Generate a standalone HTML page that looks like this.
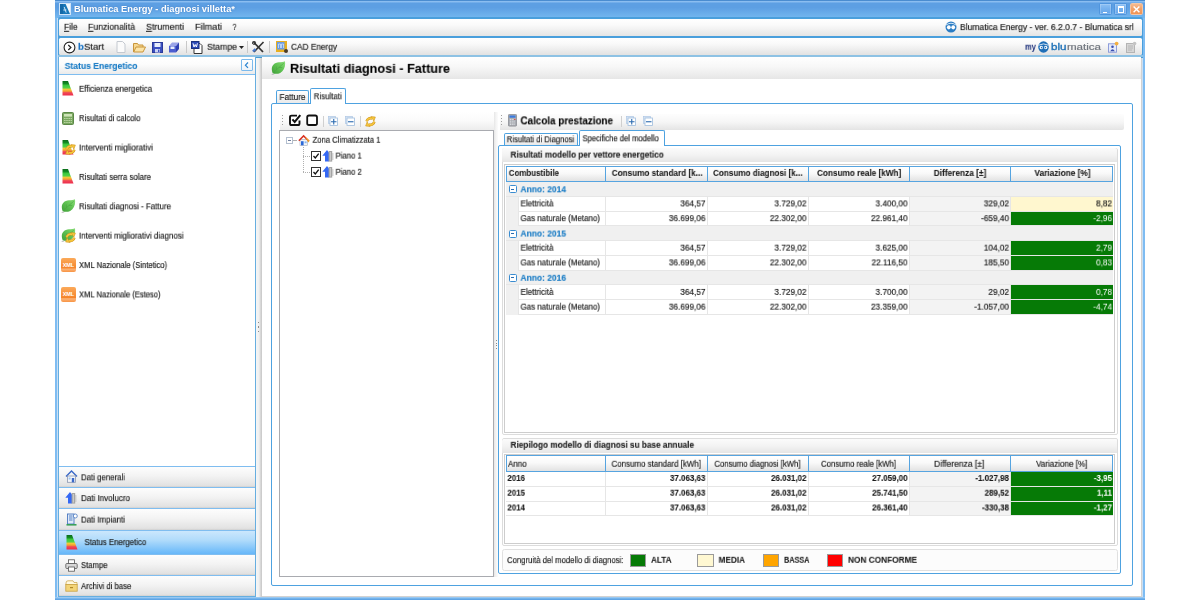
<!DOCTYPE html>
<html><head><meta charset="utf-8"><title>Blumatica Energy</title>
<style>html,body{margin:0;padding:0}body{width:1200px;height:600px;position:relative;overflow:hidden;background:#fff;font-family:'Liberation Sans', sans-serif;}u{text-decoration:underline;text-decoration-thickness:.8px;text-underline-offset:1px}.t{position:absolute;left:0;top:0;white-space:pre;transform-origin:0 0;will-change:transform}</style></head>
<body>
<div style="position:absolute;left:54.8px;top:0px;width:1090.5px;height:600px;background:#7ebcf2;"></div>
<div style="position:absolute;left:56.6px;top:17px;width:1086.8px;height:580px;background:#c9dff4;"></div>
<div style="position:absolute;left:54.8px;top:0px;width:1090.5px;height:17.5px;background:linear-gradient(#4a8cd0 0,#4a8cd0 4%,#95c5f5 9%,#5d9fe3 17%,#5d9fe3 42%,#74b7ef 100%);"></div>
<div style="position:absolute;left:57.8px;top:16.8px;width:1085.4px;height:40.2px;background:#4a9fdc;border-radius:2px;"></div>
<div style="position:absolute;left:57.8px;top:55.2px;width:1085.4px;height:1.7px;background:#8ec2e4;"></div>
<div style="position:absolute;left:57.8px;top:56.8px;width:1085.4px;height:1.3px;background:#4a9cd2;"></div>
<div style="position:absolute;left:55px;top:597px;width:1090px;height:3px;background:linear-gradient(#a9d2f6,#6aaeea 60%,#5a9fe2);"></div>
<svg width="0" height="0" style="position:absolute"><defs><linearGradient id="ape" x1="0" y1="0" x2="0" y2="1"><stop offset="0" stop-color="#0b6e1a"/><stop offset=".18" stop-color="#128a24"/><stop offset=".3" stop-color="#3cc83c"/><stop offset=".48" stop-color="#52d048"/><stop offset=".56" stop-color="#f0cc38"/><stop offset=".7" stop-color="#f4a030"/><stop offset=".8" stop-color="#f04858"/><stop offset="1" stop-color="#ec2a4a"/></linearGradient><linearGradient id="leafg" x1="0" y1="1" x2="1" y2="0"><stop offset="0" stop-color="#3f9e38"/><stop offset=".55" stop-color="#62c454"/><stop offset="1" stop-color="#8adc78"/></linearGradient><linearGradient id="xmlg" x1="0" y1="0" x2="0" y2="1"><stop offset="0" stop-color="#fba654"/><stop offset=".75" stop-color="#f6842a"/><stop offset=".8" stop-color="#fbb070"/><stop offset="1" stop-color="#f89040"/></linearGradient></defs></svg>
<div style="position:absolute;left:59px;top:2.8px;width:12px;height:12px;background:#f4f9fd;border:1px solid #cfe4f8;box-sizing:border-box;"><svg width="10" height="10" viewBox="0 0 10 10" style="position:absolute;left:0;top:0"><path d="M0 0 H5.6 L10 10 H0 Z" fill="#1877b8"/><path d="M0 0 H3 V10 H0Z" fill="#1469a8"/><path d="M4.2 3 L6.2 8.6 M3.4 6 H6.4" stroke="#cfe6f6" stroke-width="1" fill="none"/></svg></div>
<span class="t" style="font-size:8.6px;line-height:12.6px;font-weight:700;color:#fff;transform:translate(74.00px,2.70px) scaleX(1.0839);text-shadow:0 0 2px rgba(40,90,160,.5);">Blumatica Energy - diagnosi villetta*</span>
<div style="position:absolute;left:1098.8px;top:3px;width:12.8px;height:12.4px;background:linear-gradient(#8cc0f4,#74b0ee 50%,#66a6ea);border:1px solid #4f95de;box-shadow:inset 0 0 0 .6px rgba(255,255,255,.35);box-sizing:border-box;border-radius:1.5px;"><div style="position:absolute;left:3px;top:7.5px;width:4px;height:1.5px;background:#fff"></div></div>
<div style="position:absolute;left:1114.4px;top:3px;width:12.8px;height:12.4px;background:linear-gradient(#8cc0f4,#74b0ee 50%,#66a6ea);border:1px solid #4f95de;box-shadow:inset 0 0 0 .6px rgba(255,255,255,.35);box-sizing:border-box;border-radius:1.5px;"><div style="position:absolute;left:2.4px;top:2px;width:6.2px;height:6.8px;border:1px solid #fff;border-top-width:2.2px;box-sizing:border-box"></div></div>
<div style="position:absolute;left:1130px;top:3px;width:12.8px;height:12.4px;background:linear-gradient(#f6bb90,#f2a066 50%,#ef9456);border:1px solid #f4c6a4;box-sizing:border-box;border-radius:1.5px;"><svg width="11" height="11" style="position:absolute;left:0;top:0" viewBox="0 0 11 11"><path d="M2.6 2.4 L8.4 8.2 M8.4 2.4 L2.6 8.2" stroke="#fff" stroke-width="1.4"/></svg></div>
<div style="position:absolute;left:58.8px;top:18.6px;width:1083.4px;height:17.3px;border-radius:1.5px;background:linear-gradient(#fff,#fafafa 35%,#e5e5e5 100%);"></div>
<span class="t" style="font-size:9.6px;line-height:13.6px;font-weight:400;color:#1a1a1a;transform:translate(64.00px,19.80px) scaleX(0.8718);-webkit-text-stroke:.18px;"><u>F</u>ile</span>
<span class="t" style="font-size:9.6px;line-height:13.6px;font-weight:400;color:#1a1a1a;transform:translate(88.00px,19.80px) scaleX(0.9082);-webkit-text-stroke:.18px;"><u>F</u>unzionalità</span>
<span class="t" style="font-size:9.6px;line-height:13.6px;font-weight:400;color:#1a1a1a;transform:translate(146.00px,19.80px) scaleX(0.9254);-webkit-text-stroke:.18px;"><u>S</u>trumenti</span>
<span class="t" style="font-size:9.6px;line-height:13.6px;font-weight:400;color:#1a1a1a;transform:translate(195.00px,19.80px) scaleX(0.9558);-webkit-text-stroke:.18px;">Filmati</span>
<span class="t" style="font-size:9.6px;line-height:13.6px;font-weight:400;color:#1a1a1a;transform:translate(232.50px,19.80px) scaleX(0.7485);-webkit-text-stroke:.18px;">?</span>
<span class="t" style="font-size:9.6px;line-height:13.6px;font-weight:400;color:#1a1a1a;transform:translate(960.00px,20.10px) scaleX(0.8927);-webkit-text-stroke:.18px;">Blumatica Energy - ver. 6.2.0.7 - Blumatica srl</span>
<svg style="position:absolute;left:945px;top:21px" width="12" height="12" viewBox="0 0 12 12"><circle cx="6" cy="6" r="5.5" fill="#2a7cc4"/><ellipse cx="3.8" cy="6.3" rx="1.9" ry="2.1" fill="#fff"/><ellipse cx="8.2" cy="6.3" rx="1.9" ry="2.1" fill="#fff"/><path d="M1 4 Q6 0.5 11 4" stroke="#fff" stroke-width="0.8" fill="none"/></svg>
<div style="position:absolute;left:58.8px;top:38px;width:1083.4px;height:17.2px;border-radius:1.5px;background:linear-gradient(#fff,#f9f9f9 35%,#e2e2e2 100%);"></div>
<svg style="position:absolute;left:62.5px;top:40.5px" width="13" height="13" viewBox="0 0 13 13"><circle cx="6.5" cy="6.5" r="5.4" fill="#fff" stroke="#222" stroke-width="1.1"/><path d="M5.3 4 L7.9 6.5 L5.3 9" stroke="#222" stroke-width="1.2" fill="none"/></svg>
<span class="t" style="font-size:9.6px;line-height:13.6px;font-weight:400;color:#222;transform:translate(78.00px,39.80px) scaleX(0.9946);-webkit-text-stroke:.18px;"><b style="color:#1c74c4">b</b>Start</span>
<svg style="position:absolute;left:116px;top:41px" width="10" height="12" viewBox="0 0 10 12"><path d="M1 .5 H6.5 L9 3 V11.5 H1 Z" fill="#fbfbfb" stroke="#c4c9d0" stroke-width="1"/></svg>
<svg style="position:absolute;left:133px;top:42px" width="13" height="11" viewBox="0 0 13 11"><path d="M.5 10 V1.5 H4.5 L5.5 3 H10 V5" fill="#f7d891" stroke="#c8953a" stroke-width="1"/><path d="M.7 10 L3 5 H12.5 L10 10 Z" fill="#fbe3a6" stroke="#c8953a" stroke-width="1"/></svg>
<svg style="position:absolute;left:151.5px;top:41.5px" width="11" height="11" viewBox="0 0 11 11"><rect x=".5" y=".5" width="10" height="10" fill="#3b4fc0" stroke="#2a3a9a"/><rect x="2.5" y="1" width="6" height="4" fill="#e8eefc"/><rect x="3" y="7" width="5" height="3.5" fill="#c9d2f5"/><rect x="6" y="7.6" width="1.4" height="2.4" fill="#3b4fc0"/></svg>
<svg style="position:absolute;left:168px;top:41px" width="12" height="12" viewBox="0 0 12 12"><path d="M1 5 L4 1.5 H11 L8 5 Z" fill="#9aa4e8"/><path d="M8 5 L11 1.5 V8 L8 11.5 Z" fill="#2f3fb0"/><rect x="1" y="5" width="7" height="6.5" fill="#4c5ed0"/><rect x="2.5" y="5.5" width="4" height="2.5" fill="#e8eefc"/></svg>
<div style="position:absolute;left:186px;top:41px;width:1px;height:12px;background:#c8c8c8;"></div>
<svg style="position:absolute;left:191px;top:40.5px" width="12" height="13" viewBox="0 0 12 13"><path d="M3 2.5 H9 L11 4.5 V12.5 H3 Z" fill="#fff" stroke="#333" stroke-width="1"/><rect x=".5" y=".5" width="7.5" height="7" fill="#2b4bb8" stroke="#1c327e" stroke-width="1"/><path d="M2 2.3 L3 6 L4.2 3.5 L5.4 6 L6.4 2.3" stroke="#fff" stroke-width="1" fill="none"/></svg>
<span class="t" style="font-size:9.4px;line-height:13.4px;font-weight:400;color:#222;transform:translate(207.00px,39.80px) scaleX(0.9284);-webkit-text-stroke:.18px;">Stampe</span>
<svg style="position:absolute;left:238.5px;top:46px" width="5" height="3" viewBox="0 0 5 3"><path d="M0 0 H5 L2.5 3 Z" fill="#222"/></svg>
<div style="position:absolute;left:246.5px;top:41px;width:1px;height:12px;background:#c8c8c8;"></div>
<svg style="position:absolute;left:251.5px;top:41px" width="13" height="12" viewBox="0 0 13 12"><path d="M1.5 1 L11 11" stroke="#333" stroke-width="1.8"/><path d="M11.5 1 L2 11" stroke="#333" stroke-width="1.6"/><path d="M1 10.5 L3.5 8" stroke="#4a78c8" stroke-width="2.4"/><circle cx="2" cy="1.8" r="1.6" fill="none" stroke="#333" stroke-width="1"/></svg>
<div style="position:absolute;left:269px;top:41px;width:1px;height:12px;background:#c8c8c8;"></div>
<svg style="position:absolute;left:276px;top:40.5px" width="12" height="12" viewBox="0 0 12 12"><rect x="0" y="0" width="11" height="11" fill="#e8b020"/><rect x="1" y="1" width="7.5" height="7.5" fill="#6a9be0"/><path d="M2.5 7 V3 H4.5 V7 M5.5 7 V3 H7.5 V7" stroke="#cfe0f8" stroke-width=".8" fill="none"/><circle cx="10" cy="10" r="2" fill="#4a3c28"/></svg>
<span class="t" style="font-size:9.4px;line-height:13.4px;font-weight:400;color:#222;transform:translate(291.00px,39.80px) scaleX(0.8828);-webkit-text-stroke:.18px;">CAD Energy</span>
<span class="t" style="font-size:8.4px;line-height:12.4px;font-weight:700;color:#1b2f7a;transform:translate(1025.00px,40.70px) scaleX(0.8919);">my</span>
<svg style="position:absolute;left:1038px;top:40.6px" width="11" height="12" viewBox="0 0 11 12"><ellipse cx="5.5" cy="6" rx="5.3" ry="5.8" fill="#1f6fb8"/><path d="M.6 4.2 Q5.5 1.6 10.4 4.2" stroke="#fff" stroke-width=".8" fill="none"/><ellipse cx="3.3" cy="6.5" rx="1.7" ry="1.8" fill="#fff"/><ellipse cx="7.7" cy="6.5" rx="1.7" ry="1.8" fill="#fff"/><circle cx="3.6" cy="6.6" r=".8" fill="#1f6fb8"/><circle cx="7.4" cy="6.6" r=".8" fill="#1f6fb8"/></svg>
<span class="t" style="font-size:8.6px;line-height:12.6px;font-weight:400;color:#1f72b8;transform:translate(1051.00px,40.70px) scaleX(1.3515);-webkit-text-stroke:.18px;-webkit-text-stroke:.3px #1f72b8;">blu</span>
<span class="t" style="font-size:8.6px;line-height:12.6px;font-weight:400;color:#70767e;transform:translate(1066.90px,40.70px) scaleX(1.3472);-webkit-text-stroke:.18px;">matica</span>
<svg style="position:absolute;left:1108px;top:41px" width="11" height="12" viewBox="0 0 11 12"><rect x=".5" y="2.8" width="8" height="8.4" fill="#e6ebfa" stroke="#8494d8" stroke-width=".9"/><circle cx="4.5" cy="5.8" r="1.3" fill="#3a4fb0"/><path d="M2.2 10.2 Q4.5 6.2 6.8 10.2 Z" fill="#3a4fb0"/><circle cx="8.6" cy="2.6" r="1.9" fill="#f4b040"/></svg>
<svg style="position:absolute;left:1126px;top:41px" width="11" height="12" viewBox="0 0 11 12"><rect x=".5" y="2.5" width="8" height="9" fill="#d6d6d6" stroke="#b4b4b4"/><path d="M2 5 H7 M2 7 H7 M2 9 H6" stroke="#b0b0b0" stroke-width=".8"/><circle cx="8.6" cy="2.6" r="1.8" fill="#c4c4c4"/></svg>
<div style="position:absolute;left:59px;top:58px;width:1082.5px;height:539px;background:#fff;"></div>
<div style="position:absolute;left:1141px;top:58px;width:1.3px;height:539px;background:#d2d2d2;"></div>
<div style="position:absolute;left:262px;top:596px;width:880px;height:1.2px;background:#d2d2d2;"></div>
<div style="position:absolute;left:57.8px;top:57px;width:198.2px;height:540px;box-sizing:border-box;border:1.2px solid #66aee0;border-top:none;background:#fff;"></div>
<div style="position:absolute;left:59px;top:58px;width:196px;height:15.5px;background:linear-gradient(#fff,#fcfcfc 40%,#ebebeb);border-bottom:1px solid #7fbdf0;"></div>
<span class="t" style="font-size:9px;line-height:13px;font-weight:700;color:#1479c4;transform:translate(64.70px,59.90px) scaleX(0.9512);-webkit-text-stroke:.1px;">Status Energetico</span>
<div style="position:absolute;left:241.3px;top:59px;width:11.4px;height:12.4px;box-sizing:border-box;border:1px solid #7cbaec;background:linear-gradient(#fff,#eef4fa);border-radius:1px;"><svg width="9" height="10" style="position:absolute;left:0;top:0" viewBox="0 0 9 10"><path d="M6 2.5 L3.4 5.2 L6 7.9" stroke="#2a84d0" stroke-width="1.2" fill="none"/></svg></div>
<span class="t" style="font-size:9px;line-height:13px;font-weight:400;color:#1a1a1a;transform:translate(79.00px,82.80px) scaleX(0.8754);-webkit-text-stroke:.18px;">Efficienza energetica</span>
<svg style="position:absolute;left:61.5px;top:81.3px" width="12" height="15" viewBox="0 0 12 15"><path d="M.5 0 H6 L11.5 14.6 H.5 Z" fill="url(#ape)"/></svg>
<span class="t" style="font-size:9px;line-height:13px;font-weight:400;color:#1a1a1a;transform:translate(79.00px,112.18px) scaleX(0.8524);-webkit-text-stroke:.18px;">Risultati di calcolo</span>
<svg style="position:absolute;left:62px;top:111.58px" width="12" height="13" viewBox="0 0 12 13"><rect x=".5" y=".5" width="11" height="12" rx="1" fill="#7aa860" stroke="#5c8848"/><rect x="2" y="2" width="8" height="2.6" fill="#cfe4b8"/><path d="M2 6.5 H10 M2 8.5 H10 M2 10.5 H10" stroke="#b8d4a0" stroke-width="1.1" stroke-dasharray="1.6 .6"/></svg>
<span class="t" style="font-size:9px;line-height:13px;font-weight:400;color:#1a1a1a;transform:translate(79.00px,141.55px) scaleX(0.9021);-webkit-text-stroke:.18px;">Interventi migliorativi</span>
<svg style="position:absolute;left:61.5px;top:140.05px" width="12" height="15" viewBox="0 0 12 15"><path d="M.5 0 H6 L11.5 14.6 H.5 Z" fill="url(#ape)"/></svg>
<svg style="position:absolute;left:65.3px;top:143.85px" width="11" height="11" viewBox="0 0 11 11"><g stroke="#c88c18" stroke-width="2.6" fill="none"><path d="M1.7 5.3 A3.9 3.9 0 0 1 7.2 2.5"/><path d="M9.3 5.7 A3.9 3.9 0 0 1 3.8 8.5"/></g><g fill="#f6c63c" stroke="#c88c18" stroke-width=".5"><path d="M6 .5 L10.4 1 L8.9 5.2 Z"/><path d="M5 10.5 L.6 10 L2.1 5.8 Z"/></g><g stroke="#f6c63c" stroke-width="1.6" fill="none"><path d="M1.7 5.3 A3.9 3.9 0 0 1 7.2 2.5"/><path d="M9.3 5.7 A3.9 3.9 0 0 1 3.8 8.5"/></g></svg>
<span class="t" style="font-size:9px;line-height:13px;font-weight:400;color:#1a1a1a;transform:translate(79.00px,170.93px) scaleX(0.8777);-webkit-text-stroke:.18px;">Risultati serra solare</span>
<svg style="position:absolute;left:61.5px;top:169.43px" width="12" height="15" viewBox="0 0 12 15"><path d="M.5 0 H6 L11.5 14.6 H.5 Z" fill="url(#ape)"/></svg>
<span class="t" style="font-size:9px;line-height:13px;font-weight:400;color:#1a1a1a;transform:translate(79.00px,200.30px) scaleX(0.8800);-webkit-text-stroke:.18px;">Risultati diagnosi - Fatture</span>
<svg style="position:absolute;left:61.4px;top:199.0px" width="15" height="15" viewBox="0 0 15 15"><path d="M.2 14 L3.5 13.6 L2 12.2Z" fill="#b8b8b8"/><path d="M1.6 12 C-.6 6.5 1.8 1.8 8 1.3 C10.5 1.1 12.5 .9 13.9 .2 C14.8 5 13.2 9.8 9.2 11.9 C6.6 13.2 3.4 13.1 1.6 12 Z" fill="url(#leafg)"/><path d="M2.2 11.6 C5 9 9 5.5 12.8 2.2 M5.5 8.6 L5.3 5.5 M8 6.4 L11.2 6.6" stroke="#4aa840" stroke-width=".6" fill="none"/></svg>
<span class="t" style="font-size:9px;line-height:13px;font-weight:400;color:#1a1a1a;transform:translate(79.00px,229.68px) scaleX(0.8860);-webkit-text-stroke:.18px;">Interventi migliorativi diagnosi</span>
<svg style="position:absolute;left:61.4px;top:228.38px" width="15" height="15" viewBox="0 0 15 15"><path d="M.2 14 L3.5 13.6 L2 12.2Z" fill="#b8b8b8"/><path d="M1.6 12 C-.6 6.5 1.8 1.8 8 1.3 C10.5 1.1 12.5 .9 13.9 .2 C14.8 5 13.2 9.8 9.2 11.9 C6.6 13.2 3.4 13.1 1.6 12 Z" fill="url(#leafg)"/><path d="M2.2 11.6 C5 9 9 5.5 12.8 2.2 M5.5 8.6 L5.3 5.5 M8 6.4 L11.2 6.6" stroke="#4aa840" stroke-width=".6" fill="none"/></svg>
<svg style="position:absolute;left:65.3px;top:232.38px" width="11" height="11" viewBox="0 0 11 11"><g stroke="#c88c18" stroke-width="2.6" fill="none"><path d="M1.7 5.3 A3.9 3.9 0 0 1 7.2 2.5"/><path d="M9.3 5.7 A3.9 3.9 0 0 1 3.8 8.5"/></g><g fill="#f6c63c" stroke="#c88c18" stroke-width=".5"><path d="M6 .5 L10.4 1 L8.9 5.2 Z"/><path d="M5 10.5 L.6 10 L2.1 5.8 Z"/></g><g stroke="#f6c63c" stroke-width="1.6" fill="none"><path d="M1.7 5.3 A3.9 3.9 0 0 1 7.2 2.5"/><path d="M9.3 5.7 A3.9 3.9 0 0 1 3.8 8.5"/></g></svg>
<span class="t" style="font-size:9px;line-height:13px;font-weight:400;color:#1a1a1a;transform:translate(79.00px,259.06px) scaleX(0.8484);-webkit-text-stroke:.18px;">XML Nazionale (Sintetico)</span>
<div style="position:absolute;left:61.2px;top:257.96px;width:14.8px;height:14.2px;background:linear-gradient(#fbaa5a,#f6842a 72%,#fbb478 78%,#f89444);border-radius:2px;"><span style="position:absolute;left:1.6px;top:3.6px;font-size:5.6px;line-height:6px;font-weight:700;color:#fff;letter-spacing:-.25px">XML</span></div>
<span class="t" style="font-size:9px;line-height:13px;font-weight:400;color:#1a1a1a;transform:translate(79.00px,288.43px) scaleX(0.8416);-webkit-text-stroke:.18px;">XML Nazionale (Esteso)</span>
<div style="position:absolute;left:61.2px;top:287.33px;width:14.8px;height:14.2px;background:linear-gradient(#fbaa5a,#f6842a 72%,#fbb478 78%,#f89444);border-radius:2px;"><span style="position:absolute;left:1.6px;top:3.6px;font-size:5.6px;line-height:6px;font-weight:700;color:#fff;letter-spacing:-.25px">XML</span></div>
<div style="position:absolute;left:59px;top:466px;width:196px;height:21px;box-sizing:border-box;border-top:1px solid #7fbdf0;background:linear-gradient(#fdfdfd,#f3f3f3 45%,#e2e2e2 92%,#d0d0d0 100%);"></div>
<span class="t" style="font-size:9px;line-height:13px;font-weight:400;color:#1a1a1a;transform:translate(81.00px,471.30px) scaleX(0.8707);-webkit-text-stroke:.18px;">Dati generali</span>
<div style="position:absolute;left:59px;top:487px;width:196px;height:21px;box-sizing:border-box;border-top:1px solid #7fbdf0;background:linear-gradient(#fdfdfd,#f3f3f3 45%,#e2e2e2 92%,#d0d0d0 100%);"></div>
<span class="t" style="font-size:9px;line-height:13px;font-weight:400;color:#1a1a1a;transform:translate(81.00px,492.10px) scaleX(0.8904);-webkit-text-stroke:.18px;">Dati Involucro</span>
<div style="position:absolute;left:59px;top:508px;width:196px;height:21.5px;box-sizing:border-box;border-top:1px solid #7fbdf0;background:linear-gradient(#fdfdfd,#f3f3f3 45%,#e2e2e2 92%,#d0d0d0 100%);"></div>
<span class="t" style="font-size:9px;line-height:13px;font-weight:400;color:#1a1a1a;transform:translate(81.00px,513.60px) scaleX(0.8795);-webkit-text-stroke:.18px;">Dati Impianti</span>
<div style="position:absolute;left:59px;top:529.6px;width:196px;height:24.0px;box-sizing:border-box;border-top:1px solid #7fbdf0;background:linear-gradient(#cbe7fd,#b0dbfb 40%,#66b7f9 100%);"></div>
<span class="t" style="font-size:9px;line-height:13px;font-weight:400;color:#1a1a1a;transform:translate(84.50px,536.10px) scaleX(0.8691);-webkit-text-stroke:.18px;">Status Energetico</span>
<div style="position:absolute;left:59px;top:553.6px;width:196px;height:21.600000000000023px;box-sizing:border-box;border-top:1px solid #7fbdf0;background:linear-gradient(#fdfdfd,#f3f3f3 45%,#e2e2e2 92%,#d0d0d0 100%);"></div>
<span class="t" style="font-size:9px;line-height:13px;font-weight:400;color:#1a1a1a;transform:translate(81.00px,559.10px) scaleX(0.8540);-webkit-text-stroke:.18px;">Stampe</span>
<div style="position:absolute;left:59px;top:575.2px;width:196px;height:21.0px;box-sizing:border-box;border-top:1px solid #7fbdf0;background:linear-gradient(#fdfdfd,#f3f3f3 45%,#e2e2e2 92%,#d0d0d0 100%);"></div>
<span class="t" style="font-size:9px;line-height:13px;font-weight:400;color:#1a1a1a;transform:translate(81.00px,580.10px) scaleX(0.8585);-webkit-text-stroke:.18px;">Archivi di base</span>
<svg style="position:absolute;left:65px;top:470px" width="13" height="13" viewBox="0 0 13 13"><path d="M1 6.5 L6.5 1 L12 6.5" stroke="#3a68c8" stroke-width="1.4" fill="none"/><rect x="2.5" y="6" width="8" height="6.3" fill="#f4f6fa" stroke="#8a96b0" stroke-width=".8"/><rect x="6.8" y="8" width="2.4" height="4.3" fill="#3a68c8"/><rect x="3.6" y="7.5" width="2" height="2" fill="#9cc4f0"/></svg>
<svg style="position:absolute;left:65px;top:491px" width="12" height="13" viewBox="0 0 12 13"><path d="M.3 6.8 L5 1 L9.4 6.8 H7 V12.6 H3 V6.8 Z" fill="#3468f4"/><rect x="6.6" y="2" width="3.6" height="10.6" fill="#a4a4a4"/><rect x="7.8" y="3" width="1" height="8.6" fill="#d4d4d4"/><rect x="10.2" y="4" width="1.2" height="7" fill="#c8c8c8"/></svg>
<svg style="position:absolute;left:65.5px;top:512.5px" width="12" height="13" viewBox="0 0 12 13"><rect x="1.5" y="1" width="6.5" height="10" fill="#dfe9f8" stroke="#4a78c0" stroke-width=".9"/><path d="M3 3 H6.5 M3 5 H6.5 M3 7 H6.5" stroke="#4a78c0" stroke-width=".9"/><circle cx="9.3" cy="3" r="2" fill="#fff" stroke="#4a78c0" stroke-width=".8"/><rect x=".5" y="11" width="10" height="1.6" fill="#3aa05a"/></svg>
<svg style="position:absolute;left:66px;top:534.5px" width="12" height="15" viewBox="0 0 12 15"><path d="M.5 0 H6 L11.5 14.6 H.5 Z" fill="url(#ape)"/></svg>
<svg style="position:absolute;left:65px;top:558.5px" width="13" height="13" viewBox="0 0 13 13"><rect x="3.5" y=".8" width="6" height="4" fill="#fff" stroke="#555" stroke-width=".8"/><rect x=".8" y="4.5" width="11.4" height="5" rx="1" fill="#d8d8d8" stroke="#555" stroke-width=".8"/><rect x="3.5" y="8" width="6" height="4.2" fill="#fff" stroke="#555" stroke-width=".8"/></svg>
<svg style="position:absolute;left:65px;top:580px" width="13" height="12" viewBox="0 0 13 12"><path d="M1 3 Q1 .8 3 .8 H8 L9 2.5 H12 V5 H1 Z" fill="#fff8e0" stroke="#c8a040" stroke-width=".7"/><rect x=".8" y="4.5" width="11.4" height="6.7" fill="#f3d478" stroke="#c8a040" stroke-width=".8"/><rect x="5" y="7" width="3" height="1.2" fill="#b08828"/></svg>
<div style="position:absolute;left:256px;top:58px;width:5.6px;height:539px;background:linear-gradient(90deg,#f6f6f6 0,#f0f0f0 50%,#dcdcdc 70%,#c6c6c6 100%);"></div>
<div style="position:absolute;left:257.9px;top:322.2px;width:1px;height:1.2px;background:#8c8c8c;"></div>
<div style="position:absolute;left:257.9px;top:326.4px;width:1px;height:1.2px;background:#8c8c8c;"></div>
<div style="position:absolute;left:257.9px;top:330.6px;width:1px;height:1.2px;background:#8c8c8c;"></div>
<div style="position:absolute;left:262px;top:57px;width:879px;height:21.5px;background:linear-gradient(#fff,#f7f7f7 45%,#e6e6e6 100%);"></div>
<svg style="position:absolute;left:270.6px;top:61.3px" width="15" height="15" viewBox="0 0 15 15"><path d="M.2 14 L3.5 13.6 L2 12.2Z" fill="#b8b8b8"/><path d="M1.6 12 C-.6 6.5 1.8 1.8 8 1.3 C10.5 1.1 12.5 .9 13.9 .2 C14.8 5 13.2 9.8 9.2 11.9 C6.6 13.2 3.4 13.1 1.6 12 Z" fill="url(#leafg)"/><path d="M2.2 11.6 C5 9 9 5.5 12.8 2.2 M5.5 8.6 L5.3 5.5 M8 6.4 L11.2 6.6" stroke="#4aa840" stroke-width=".6" fill="none"/></svg>
<span class="t" style="font-size:13px;line-height:17px;font-weight:700;color:#000;transform:translate(290.00px,59.85px) scaleX(0.9758);-webkit-text-stroke:.1px;">Risultati diagnosi - Fatture</span>
<div style="position:absolute;left:271px;top:102.8px;width:862.2px;height:483px;box-sizing:border-box;border:1.2px solid #4ea2e0;border-radius:2px;background:#fff;"></div>
<div style="position:absolute;left:275.7px;top:90.2px;width:33.8px;height:13.2px;box-sizing:border-box;border:1px solid #4ea2e0;border-bottom:none;border-radius:2px 2px 0 0;background:linear-gradient(#fff,#eaeaea);"></div>
<div style="position:absolute;left:309.8px;top:87.7px;width:36px;height:16.4px;box-sizing:border-box;border:1px solid #4ea2e0;border-bottom:none;border-radius:2px 2px 0 0;background:#fff;"></div>
<span class="t" style="font-size:9px;line-height:13px;font-weight:400;color:#1a1a1a;transform:translate(279.50px,91.00px) scaleX(0.9118);-webkit-text-stroke:.18px;">Fatture</span>
<span class="t" style="font-size:9px;line-height:13px;font-weight:400;color:#1a1a1a;transform:translate(313.75px,90.30px) scaleX(0.8746);-webkit-text-stroke:.18px;">Risultati</span>
<div style="position:absolute;left:280px;top:111.5px;width:214px;height:18.5px;background:linear-gradient(#fff,#fbfbfb 45%,#ececec);"></div>
<div style="position:absolute;left:282.3px;top:115px;width:1px;height:1.2px;background:#a0a0a0;"></div>
<div style="position:absolute;left:282.3px;top:118.1px;width:1px;height:1.2px;background:#a0a0a0;"></div>
<div style="position:absolute;left:282.3px;top:121.2px;width:1px;height:1.2px;background:#a0a0a0;"></div>
<div style="position:absolute;left:282.3px;top:124.3px;width:1px;height:1.2px;background:#a0a0a0;"></div>
<svg style="position:absolute;left:289px;top:114.3px" width="13" height="12" viewBox="0 0 13 12"><path d="M8 1.6 H2.6 Q1 1.6 1 3.2 V9.4 Q1 11 2.6 11 H8.9 Q10.5 11 10.5 9.4 V6.5" fill="#fff" stroke="#111" stroke-width="1.9"/><path d="M3.4 5.4 L5.7 8 L11.3 1.2" stroke="#111" stroke-width="2" fill="none"/></svg>
<svg style="position:absolute;left:305.5px;top:114.3px" width="13" height="12" viewBox="0 0 13 12"><rect x="1.2" y="1.5" width="9.8" height="9.5" rx="1.8" fill="#fff" stroke="#111" stroke-width="1.8"/></svg>
<div style="position:absolute;left:323px;top:115.5px;width:1px;height:11px;background:#d0d0d0;"></div>
<svg style="position:absolute;left:328px;top:116px" width="10" height="10" viewBox="0 0 10 10"><rect x=".4" y=".4" width="7" height="7" fill="#d9e6f5" stroke="#b0c8e4" stroke-width=".7"/><rect x="2" y="2" width="7.5" height="7.5" fill="#fff" stroke="#9fbcdd" stroke-width=".8"/><path d="M3 5.75 H8.5 M5.75 3 V8.5" stroke="#2a6ab0" stroke-width="1.1"/></svg>
<svg style="position:absolute;left:345px;top:116px" width="10" height="10" viewBox="0 0 10 10"><rect x=".4" y=".4" width="7" height="7" fill="#d9e6f5" stroke="#b0c8e4" stroke-width=".7"/><rect x="2" y="2" width="7.5" height="7.5" fill="#fff" stroke="#9fbcdd" stroke-width=".8"/><path d="M3 5.75 H8.5 " stroke="#2a6ab0" stroke-width="1.1"/></svg>
<div style="position:absolute;left:360px;top:115.5px;width:1px;height:11px;background:#d0d0d0;"></div>
<svg style="position:absolute;left:365px;top:115.5px" width="11" height="11" viewBox="0 0 11 11"><g stroke="#c88c18" stroke-width="2.6" fill="none"><path d="M1.7 5.3 A3.9 3.9 0 0 1 7.2 2.5"/><path d="M9.3 5.7 A3.9 3.9 0 0 1 3.8 8.5"/></g><g fill="#f6c63c" stroke="#c88c18" stroke-width=".5"><path d="M6 .5 L10.4 1 L8.9 5.2 Z"/><path d="M5 10.5 L.6 10 L2.1 5.8 Z"/></g><g stroke="#f6c63c" stroke-width="1.6" fill="none"><path d="M1.7 5.3 A3.9 3.9 0 0 1 7.2 2.5"/><path d="M9.3 5.7 A3.9 3.9 0 0 1 3.8 8.5"/></g></svg>
<div style="position:absolute;left:279.3px;top:129.6px;width:215.2px;height:447.2px;box-sizing:border-box;border:1.3px solid #a9abb0;background:#fff;"></div>
<div style="position:absolute;left:286px;top:136.8px;width:7px;height:7px;box-sizing:border-box;border:1px solid #b4c0d0;background:#fff;"><div style="position:absolute;left:1px;top:2px;width:3px;height:1px;background:#7080a0"></div></div>
<div style="position:absolute;left:293px;top:140px;width:4px;height:1px;background:#b0b0b0;"></div>
<svg style="position:absolute;left:297.5px;top:134px" width="12" height="12" viewBox="0 0 12 12"><rect x="2" y="5.5" width="7.5" height="5.8" fill="#f2f4f8" stroke="#a0a8b8" stroke-width=".6"/><path d="M.3 6.3 L5.6 .8 L8 3.2 L11.6 6.8 L10.2 7.6 L5.6 3 L1.4 7.2Z" fill="#d83020"/><path d="M7.2 2.6 L11.6 6.8 L10.4 8.6 L9 6.2Z" fill="#f0a028"/><rect x="3" y="7.2" width="2.6" height="4.1" fill="#2a68d8"/><rect x="6.6" y="7.4" width="2" height="1.8" fill="#8ab8f0"/></svg>
<span class="t" style="font-size:9px;line-height:13px;font-weight:400;color:#1a1a1a;transform:translate(312.50px,133.80px) scaleX(0.8548);-webkit-text-stroke:.18px;">Zona Climatizzata 1</span>
<div style="position:absolute;left:303px;top:155.6px;width:8px;height:1px;background:repeating-linear-gradient(90deg,#b0b0b0 0,#b0b0b0 1px,transparent 1px,transparent 2px);"></div>
<div style="position:absolute;left:311px;top:150.6px;width:10px;height:10px;box-sizing:border-box;border:1px solid #333;background:#fff;"><svg width="8" height="8" style="position:absolute;left:0;top:0" viewBox="0 0 8 8"><path d="M1.5 4 L3.3 6 L6.7 1.6" stroke="#111" stroke-width="1.3" fill="none"/></svg></div>
<svg style="position:absolute;left:321.5px;top:148.6px" width="12" height="13" viewBox="0 0 12 13"><path d="M.3 6.8 L5 1 L9.4 6.8 H7 V12.6 H3 V6.8 Z" fill="#3468f4"/><rect x="6.6" y="2" width="3.6" height="10.6" fill="#a4a4a4"/><rect x="7.8" y="3" width="1" height="8.6" fill="#d4d4d4"/><rect x="10.2" y="4" width="1.2" height="7" fill="#c8c8c8"/></svg>
<div style="position:absolute;left:303px;top:171.8px;width:8px;height:1px;background:repeating-linear-gradient(90deg,#b0b0b0 0,#b0b0b0 1px,transparent 1px,transparent 2px);"></div>
<div style="position:absolute;left:311px;top:166.8px;width:10px;height:10px;box-sizing:border-box;border:1px solid #333;background:#fff;"><svg width="8" height="8" style="position:absolute;left:0;top:0" viewBox="0 0 8 8"><path d="M1.5 4 L3.3 6 L6.7 1.6" stroke="#111" stroke-width="1.3" fill="none"/></svg></div>
<svg style="position:absolute;left:321.5px;top:164.8px" width="12" height="13" viewBox="0 0 12 13"><path d="M.3 6.8 L5 1 L9.4 6.8 H7 V12.6 H3 V6.8 Z" fill="#3468f4"/><rect x="6.6" y="2" width="3.6" height="10.6" fill="#a4a4a4"/><rect x="7.8" y="3" width="1" height="8.6" fill="#d4d4d4"/><rect x="10.2" y="4" width="1.2" height="7" fill="#c8c8c8"/></svg>
<div style="position:absolute;left:303px;top:147px;width:1px;height:25px;background:repeating-linear-gradient(#b0b0b0 0,#b0b0b0 1px,transparent 1px,transparent 2px);"></div>
<span class="t" style="font-size:9px;line-height:13px;font-weight:400;color:#1a1a1a;transform:translate(335.50px,149.60px) scaleX(0.8598);-webkit-text-stroke:.18px;">Piano 1</span>
<span class="t" style="font-size:9px;line-height:13px;font-weight:400;color:#1a1a1a;transform:translate(335.50px,165.80px) scaleX(0.8598);-webkit-text-stroke:.18px;">Piano 2</span>
<div style="position:absolute;left:494.3px;top:111.5px;width:4.2px;height:465px;background:linear-gradient(90deg,#e6e6e6,#f4f4f4 50%,#fbfbfb);"></div>
<div style="position:absolute;left:495.5px;top:340px;width:1px;height:1px;background:#8a8a8a;"></div>
<div style="position:absolute;left:495.5px;top:342.5px;width:1px;height:1px;background:#8a8a8a;"></div>
<div style="position:absolute;left:495.5px;top:345px;width:1px;height:1px;background:#8a8a8a;"></div>
<div style="position:absolute;left:495.5px;top:347.5px;width:1px;height:1px;background:#8a8a8a;"></div>
<div style="position:absolute;left:500px;top:113.5px;width:624px;height:16px;background:linear-gradient(#fdfdfd,#f6f6f6 50%,#e4e4e4);border-radius:0 2px 2px 0;"></div>
<div style="position:absolute;left:501.2px;top:115px;width:1px;height:1.2px;background:#a0a0a0;"></div>
<div style="position:absolute;left:501.2px;top:118.1px;width:1px;height:1.2px;background:#a0a0a0;"></div>
<div style="position:absolute;left:501.2px;top:121.2px;width:1px;height:1.2px;background:#a0a0a0;"></div>
<div style="position:absolute;left:501.2px;top:124.3px;width:1px;height:1.2px;background:#a0a0a0;"></div>
<svg style="position:absolute;left:507.8px;top:114px" width="9" height="12.5" viewBox="0 0 9 12.5"><rect x=".4" y=".4" width="8.2" height="11.7" rx="1" fill="#a9acb2" stroke="#85888e" stroke-width=".8"/><rect x="1.5" y="1.5" width="6" height="2.2" fill="#3a7ae0"/><path d="M1.9 5.4 H7.3 M1.9 7.2 H7.3 M1.9 9 H7.3 M1.9 10.6 H7.3" stroke="#e4e6ea" stroke-width=".9" stroke-dasharray="1.1 .7"/><rect x="6.2" y="5" width="1.1" height="1" fill="#e03030"/></svg>
<span class="t" style="font-size:10.5px;line-height:14.5px;font-weight:700;color:#000;transform:translate(520.50px,113.35px) scaleX(0.9379);-webkit-text-stroke:.1px;">Calcola prestazione</span>
<div style="position:absolute;left:620.5px;top:115.5px;width:1px;height:11px;background:#d0d0d0;"></div>
<svg style="position:absolute;left:626px;top:116px" width="10" height="10" viewBox="0 0 10 10"><rect x=".4" y=".4" width="7" height="7" fill="#d9e6f5" stroke="#b0c8e4" stroke-width=".7"/><rect x="2" y="2" width="7.5" height="7.5" fill="#fff" stroke="#9fbcdd" stroke-width=".8"/><path d="M3 5.75 H8.5 M5.75 3 V8.5" stroke="#2a6ab0" stroke-width="1.1"/></svg>
<svg style="position:absolute;left:643px;top:116px" width="10" height="10" viewBox="0 0 10 10"><rect x=".4" y=".4" width="7" height="7" fill="#d9e6f5" stroke="#b0c8e4" stroke-width=".7"/><rect x="2" y="2" width="7.5" height="7.5" fill="#fff" stroke="#9fbcdd" stroke-width=".8"/><path d="M3 5.75 H8.5 " stroke="#2a6ab0" stroke-width="1.1"/></svg>
<div style="position:absolute;left:498.3px;top:144.6px;width:622.4px;height:429.4px;box-sizing:border-box;border:1.3px solid #4ea2e0;border-radius:2px;background:#fff;"></div>
<div style="position:absolute;left:503.75px;top:132.5px;width:74px;height:12.8px;box-sizing:border-box;border:1px solid #4ea2e0;border-bottom:none;border-radius:2px 2px 0 0;background:linear-gradient(#fff,#eaeaea);"></div>
<div style="position:absolute;left:578.5px;top:130px;width:86px;height:15.8px;box-sizing:border-box;border:1px solid #4ea2e0;border-bottom:none;border-radius:2px 2px 0 0;background:#fff;"></div>
<span class="t" style="font-size:9px;line-height:13px;font-weight:400;color:#1a1a1a;transform:translate(506.75px,133.30px) scaleX(0.8539);-webkit-text-stroke:.18px;">Risultati di Diagnosi</span>
<span class="t" style="font-size:9px;line-height:13px;font-weight:400;color:#1a1a1a;transform:translate(582.50px,132.30px) scaleX(0.8466);-webkit-text-stroke:.18px;">Specifiche del modello</span>
<div style="position:absolute;left:501.5px;top:147.5px;width:616px;height:287.5px;box-sizing:border-box;border:1px solid #dcdcdc;border-radius:2px;background:#fff;"></div>
<div style="position:absolute;left:502px;top:148.0px;width:615px;height:14px;background:linear-gradient(#fbfbfb,#f3f3f3 50%,#e5e5e5);border-radius:2px 2px 0 0;"></div>
<span class="t" style="font-size:9px;line-height:13px;font-weight:700;color:#1a1a1a;transform:translate(510.50px,148.60px) scaleX(0.9039);-webkit-text-stroke:.1px;">Risultati modello per vettore energetico</span>
<div style="position:absolute;left:503.8px;top:164px;width:611.5px;height:269px;box-sizing:border-box;border:1px solid #cdcdcd;background:#fff;"></div>
<div style="position:absolute;left:505.5px;top:165.5px;width:607.8px;height:16.2px;box-sizing:border-box;border:1px solid #56a4e0;background:linear-gradient(#fff,#f9f9f9 45%,#e2e2e2);"></div>
<div style="position:absolute;left:605.0px;top:165.5px;width:1px;height:16.2px;background:#56a4e0;"></div>
<div style="position:absolute;left:706.5px;top:165.5px;width:1px;height:16.2px;background:#56a4e0;"></div>
<div style="position:absolute;left:807.9px;top:165.5px;width:1px;height:16.2px;background:#56a4e0;"></div>
<div style="position:absolute;left:909.0px;top:165.5px;width:1px;height:16.2px;background:#56a4e0;"></div>
<div style="position:absolute;left:1010.2px;top:165.5px;width:1px;height:16.2px;background:#56a4e0;"></div>
<span class="t" style="font-size:9px;line-height:13px;font-weight:700;color:#1a1a1a;transform:translate(508.75px,166.90px) scaleX(0.8813);-webkit-text-stroke:.1px;">Combustibile</span>
<span class="t" style="font-size:9px;line-height:13px;font-weight:700;color:#1a1a1a;transform:translate(611.75px,166.90px) scaleX(0.9074);-webkit-text-stroke:.1px;">Consumo standard [k...</span>
<span class="t" style="font-size:9px;line-height:13px;font-weight:700;color:#1a1a1a;transform:translate(713.00px,166.90px) scaleX(0.9039);-webkit-text-stroke:.1px;">Consumo diagnosi [k...</span>
<span class="t" style="font-size:9px;line-height:13px;font-weight:700;color:#1a1a1a;transform:translate(817.00px,166.90px) scaleX(0.9107);-webkit-text-stroke:.1px;">Consumo reale [kWh]</span>
<span class="t" style="font-size:9px;line-height:13px;font-weight:700;color:#1a1a1a;transform:translate(933.75px,166.90px) scaleX(0.9218);-webkit-text-stroke:.1px;">Differenza [±]</span>
<span class="t" style="font-size:9px;line-height:13px;font-weight:700;color:#1a1a1a;transform:translate(1034.50px,166.90px) scaleX(0.9176);-webkit-text-stroke:.1px;">Variazione [%]</span>
<div style="position:absolute;left:505.5px;top:182.1px;width:607.8px;height:14.75px;background:#f0f0f0;border-bottom:1px solid #e6e6e6;box-sizing:border-box;"></div>
<div style="position:absolute;left:508.6px;top:185.29999999999998px;width:8px;height:8px;box-sizing:border-box;border:1px solid #3a8cd0;border-radius:1.5px;background:#fff;"><div style="position:absolute;left:1.5px;top:2.5px;width:3px;height:1px;background:#2a6cb0"></div></div>
<span class="t" style="font-size:9px;line-height:13px;font-weight:700;color:#1479c4;transform:translate(520.50px,183.27px) scaleX(0.9378);-webkit-text-stroke:.1px;">Anno: 2014</span>
<div style="position:absolute;left:505.5px;top:196.85px;width:13.3px;height:14.75px;background:#f0f0f0;"></div>
<div style="position:absolute;left:518.8px;top:196.85px;width:594.5px;height:14.75px;box-sizing:border-box;border-bottom:1px solid #e6e6e6;background:#fff;"></div>
<div style="position:absolute;left:909.5px;top:196.85px;width:101.20000000000005px;height:13.75px;background:#f3f3f3;"></div>
<div style="position:absolute;left:1010.7px;top:196.85px;width:102.59999999999991px;height:13.75px;background:#fff7cf;"></div>
<div style="position:absolute;left:605.0px;top:196.85px;width:1px;height:14.75px;background:#e6e6e6;"></div>
<div style="position:absolute;left:706.5px;top:196.85px;width:1px;height:14.75px;background:#e6e6e6;"></div>
<div style="position:absolute;left:807.9px;top:196.85px;width:1px;height:14.75px;background:#e6e6e6;"></div>
<div style="position:absolute;left:909.0px;top:196.85px;width:1px;height:14.75px;background:#e6e6e6;"></div>
<div style="position:absolute;left:1010.2px;top:196.85px;width:1px;height:14.75px;background:#e6e6e6;"></div>
<div style="position:absolute;left:518.3px;top:196.85px;width:1px;height:14.75px;background:#e6e6e6;"></div>
<span class="t" style="font-size:9px;line-height:13px;font-weight:400;color:#1a1a1a;transform:translate(520.50px,197.42px) scaleX(0.8915);-webkit-text-stroke:.18px;">Elettricità</span>
<span class="t" style="font-size:9px;line-height:13px;font-weight:400;color:#1a1a1a;transform:translate(680.31px,197.42px) scaleX(0.9150);-webkit-text-stroke:.18px;">364,57</span>
<span class="t" style="font-size:9px;line-height:13px;font-weight:400;color:#1a1a1a;transform:translate(774.43px,197.42px) scaleX(0.9150);-webkit-text-stroke:.18px;">3.729,02</span>
<span class="t" style="font-size:9px;line-height:13px;font-weight:400;color:#1a1a1a;transform:translate(875.53px,197.42px) scaleX(0.9150);-webkit-text-stroke:.18px;">3.400,00</span>
<span class="t" style="font-size:9px;line-height:13px;font-weight:400;color:#1a1a1a;transform:translate(983.81px,197.42px) scaleX(0.9150);-webkit-text-stroke:.18px;">329,02</span>
<span class="t" style="font-size:9px;line-height:13px;font-weight:400;color:#1a1a1a;transform:translate(1095.96px,197.42px) scaleX(0.9150);-webkit-text-stroke:.18px;">8,82</span>
<div style="position:absolute;left:505.5px;top:211.6px;width:13.3px;height:14.75px;background:#f0f0f0;"></div>
<div style="position:absolute;left:518.8px;top:211.6px;width:594.5px;height:14.75px;box-sizing:border-box;border-bottom:1px solid #e6e6e6;background:#fff;"></div>
<div style="position:absolute;left:909.5px;top:211.6px;width:101.20000000000005px;height:13.75px;background:#f3f3f3;"></div>
<div style="position:absolute;left:1010.7px;top:211.6px;width:102.59999999999991px;height:13.75px;background:#067a06;"></div>
<div style="position:absolute;left:605.0px;top:211.6px;width:1px;height:14.75px;background:#e6e6e6;"></div>
<div style="position:absolute;left:706.5px;top:211.6px;width:1px;height:14.75px;background:#e6e6e6;"></div>
<div style="position:absolute;left:807.9px;top:211.6px;width:1px;height:14.75px;background:#e6e6e6;"></div>
<div style="position:absolute;left:909.0px;top:211.6px;width:1px;height:14.75px;background:#e6e6e6;"></div>
<div style="position:absolute;left:1010.2px;top:211.6px;width:1px;height:14.75px;background:#e6e6e6;"></div>
<div style="position:absolute;left:518.3px;top:211.6px;width:1px;height:14.75px;background:#e6e6e6;"></div>
<span class="t" style="font-size:9px;line-height:13px;font-weight:400;color:#1a1a1a;transform:translate(520.50px,212.17px) scaleX(0.8829);-webkit-text-stroke:.18px;">Gas naturale (Metano)</span>
<span class="t" style="font-size:9px;line-height:13px;font-weight:400;color:#1a1a1a;transform:translate(668.86px,212.17px) scaleX(0.9150);-webkit-text-stroke:.18px;">36.699,06</span>
<span class="t" style="font-size:9px;line-height:13px;font-weight:400;color:#1a1a1a;transform:translate(769.86px,212.17px) scaleX(0.9150);-webkit-text-stroke:.18px;">22.302,00</span>
<span class="t" style="font-size:9px;line-height:13px;font-weight:400;color:#1a1a1a;transform:translate(870.96px,212.17px) scaleX(0.9150);-webkit-text-stroke:.18px;">22.961,40</span>
<span class="t" style="font-size:9px;line-height:13px;font-weight:400;color:#1a1a1a;transform:translate(981.06px,212.17px) scaleX(0.9150);-webkit-text-stroke:.18px;">-659,40</span>
<span class="t" style="font-size:9px;line-height:13px;font-weight:400;color:#fff;transform:translate(1093.23px,212.17px) scaleX(0.9150);">-2,96</span>
<div style="position:absolute;left:505.5px;top:226.35px;width:607.8px;height:14.75px;background:#f0f0f0;border-bottom:1px solid #e6e6e6;box-sizing:border-box;"></div>
<div style="position:absolute;left:508.6px;top:229.54999999999998px;width:8px;height:8px;box-sizing:border-box;border:1px solid #3a8cd0;border-radius:1.5px;background:#fff;"><div style="position:absolute;left:1.5px;top:2.5px;width:3px;height:1px;background:#2a6cb0"></div></div>
<span class="t" style="font-size:9px;line-height:13px;font-weight:700;color:#1479c4;transform:translate(520.50px,227.52px) scaleX(0.9378);-webkit-text-stroke:.1px;">Anno: 2015</span>
<div style="position:absolute;left:505.5px;top:241.1px;width:13.3px;height:14.75px;background:#f0f0f0;"></div>
<div style="position:absolute;left:518.8px;top:241.1px;width:594.5px;height:14.75px;box-sizing:border-box;border-bottom:1px solid #e6e6e6;background:#fff;"></div>
<div style="position:absolute;left:909.5px;top:241.1px;width:101.20000000000005px;height:13.75px;background:#f3f3f3;"></div>
<div style="position:absolute;left:1010.7px;top:241.1px;width:102.59999999999991px;height:13.75px;background:#067a06;"></div>
<div style="position:absolute;left:605.0px;top:241.1px;width:1px;height:14.75px;background:#e6e6e6;"></div>
<div style="position:absolute;left:706.5px;top:241.1px;width:1px;height:14.75px;background:#e6e6e6;"></div>
<div style="position:absolute;left:807.9px;top:241.1px;width:1px;height:14.75px;background:#e6e6e6;"></div>
<div style="position:absolute;left:909.0px;top:241.1px;width:1px;height:14.75px;background:#e6e6e6;"></div>
<div style="position:absolute;left:1010.2px;top:241.1px;width:1px;height:14.75px;background:#e6e6e6;"></div>
<div style="position:absolute;left:518.3px;top:241.1px;width:1px;height:14.75px;background:#e6e6e6;"></div>
<span class="t" style="font-size:9px;line-height:13px;font-weight:400;color:#1a1a1a;transform:translate(520.50px,241.67px) scaleX(0.8915);-webkit-text-stroke:.18px;">Elettricità</span>
<span class="t" style="font-size:9px;line-height:13px;font-weight:400;color:#1a1a1a;transform:translate(680.31px,241.67px) scaleX(0.9150);-webkit-text-stroke:.18px;">364,57</span>
<span class="t" style="font-size:9px;line-height:13px;font-weight:400;color:#1a1a1a;transform:translate(774.43px,241.67px) scaleX(0.9150);-webkit-text-stroke:.18px;">3.729,02</span>
<span class="t" style="font-size:9px;line-height:13px;font-weight:400;color:#1a1a1a;transform:translate(875.53px,241.67px) scaleX(0.9150);-webkit-text-stroke:.18px;">3.625,00</span>
<span class="t" style="font-size:9px;line-height:13px;font-weight:400;color:#1a1a1a;transform:translate(983.81px,241.67px) scaleX(0.9150);-webkit-text-stroke:.18px;">104,02</span>
<span class="t" style="font-size:9px;line-height:13px;font-weight:400;color:#fff;transform:translate(1095.96px,241.67px) scaleX(0.9150);">2,79</span>
<div style="position:absolute;left:505.5px;top:255.85px;width:13.3px;height:14.75px;background:#f0f0f0;"></div>
<div style="position:absolute;left:518.8px;top:255.85px;width:594.5px;height:14.75px;box-sizing:border-box;border-bottom:1px solid #e6e6e6;background:#fff;"></div>
<div style="position:absolute;left:909.5px;top:255.85px;width:101.20000000000005px;height:13.75px;background:#f3f3f3;"></div>
<div style="position:absolute;left:1010.7px;top:255.85px;width:102.59999999999991px;height:13.75px;background:#067a06;"></div>
<div style="position:absolute;left:605.0px;top:255.85px;width:1px;height:14.75px;background:#e6e6e6;"></div>
<div style="position:absolute;left:706.5px;top:255.85px;width:1px;height:14.75px;background:#e6e6e6;"></div>
<div style="position:absolute;left:807.9px;top:255.85px;width:1px;height:14.75px;background:#e6e6e6;"></div>
<div style="position:absolute;left:909.0px;top:255.85px;width:1px;height:14.75px;background:#e6e6e6;"></div>
<div style="position:absolute;left:1010.2px;top:255.85px;width:1px;height:14.75px;background:#e6e6e6;"></div>
<div style="position:absolute;left:518.3px;top:255.85px;width:1px;height:14.75px;background:#e6e6e6;"></div>
<span class="t" style="font-size:9px;line-height:13px;font-weight:400;color:#1a1a1a;transform:translate(520.50px,256.43px) scaleX(0.8829);-webkit-text-stroke:.18px;">Gas naturale (Metano)</span>
<span class="t" style="font-size:9px;line-height:13px;font-weight:400;color:#1a1a1a;transform:translate(668.86px,256.43px) scaleX(0.9150);-webkit-text-stroke:.18px;">36.699,06</span>
<span class="t" style="font-size:9px;line-height:13px;font-weight:400;color:#1a1a1a;transform:translate(769.86px,256.43px) scaleX(0.9150);-webkit-text-stroke:.18px;">22.302,00</span>
<span class="t" style="font-size:9px;line-height:13px;font-weight:400;color:#1a1a1a;transform:translate(871.57px,256.43px) scaleX(0.9150);-webkit-text-stroke:.18px;">22.116,50</span>
<span class="t" style="font-size:9px;line-height:13px;font-weight:400;color:#1a1a1a;transform:translate(983.81px,256.43px) scaleX(0.9150);-webkit-text-stroke:.18px;">185,50</span>
<span class="t" style="font-size:9px;line-height:13px;font-weight:400;color:#fff;transform:translate(1095.96px,256.43px) scaleX(0.9150);">0,83</span>
<div style="position:absolute;left:505.5px;top:270.6px;width:607.8px;height:14.75px;background:#f0f0f0;border-bottom:1px solid #e6e6e6;box-sizing:border-box;"></div>
<div style="position:absolute;left:508.6px;top:273.8px;width:8px;height:8px;box-sizing:border-box;border:1px solid #3a8cd0;border-radius:1.5px;background:#fff;"><div style="position:absolute;left:1.5px;top:2.5px;width:3px;height:1px;background:#2a6cb0"></div></div>
<span class="t" style="font-size:9px;line-height:13px;font-weight:700;color:#1479c4;transform:translate(520.50px,271.78px) scaleX(0.9378);-webkit-text-stroke:.1px;">Anno: 2016</span>
<div style="position:absolute;left:505.5px;top:285.35px;width:13.3px;height:14.75px;background:#f0f0f0;"></div>
<div style="position:absolute;left:518.8px;top:285.35px;width:594.5px;height:14.75px;box-sizing:border-box;border-bottom:1px solid #e6e6e6;background:#fff;"></div>
<div style="position:absolute;left:909.5px;top:285.35px;width:101.20000000000005px;height:13.75px;background:#f3f3f3;"></div>
<div style="position:absolute;left:1010.7px;top:285.35px;width:102.59999999999991px;height:13.75px;background:#067a06;"></div>
<div style="position:absolute;left:605.0px;top:285.35px;width:1px;height:14.75px;background:#e6e6e6;"></div>
<div style="position:absolute;left:706.5px;top:285.35px;width:1px;height:14.75px;background:#e6e6e6;"></div>
<div style="position:absolute;left:807.9px;top:285.35px;width:1px;height:14.75px;background:#e6e6e6;"></div>
<div style="position:absolute;left:909.0px;top:285.35px;width:1px;height:14.75px;background:#e6e6e6;"></div>
<div style="position:absolute;left:1010.2px;top:285.35px;width:1px;height:14.75px;background:#e6e6e6;"></div>
<div style="position:absolute;left:518.3px;top:285.35px;width:1px;height:14.75px;background:#e6e6e6;"></div>
<span class="t" style="font-size:9px;line-height:13px;font-weight:400;color:#1a1a1a;transform:translate(520.50px,285.93px) scaleX(0.8915);-webkit-text-stroke:.18px;">Elettricità</span>
<span class="t" style="font-size:9px;line-height:13px;font-weight:400;color:#1a1a1a;transform:translate(680.31px,285.93px) scaleX(0.9150);-webkit-text-stroke:.18px;">364,57</span>
<span class="t" style="font-size:9px;line-height:13px;font-weight:400;color:#1a1a1a;transform:translate(774.43px,285.93px) scaleX(0.9150);-webkit-text-stroke:.18px;">3.729,02</span>
<span class="t" style="font-size:9px;line-height:13px;font-weight:400;color:#1a1a1a;transform:translate(875.53px,285.93px) scaleX(0.9150);-webkit-text-stroke:.18px;">3.700,00</span>
<span class="t" style="font-size:9px;line-height:13px;font-weight:400;color:#1a1a1a;transform:translate(988.38px,285.93px) scaleX(0.9150);-webkit-text-stroke:.18px;">29,02</span>
<span class="t" style="font-size:9px;line-height:13px;font-weight:400;color:#fff;transform:translate(1095.96px,285.93px) scaleX(0.9150);">0,78</span>
<div style="position:absolute;left:505.5px;top:300.1px;width:13.3px;height:14.75px;background:#f0f0f0;"></div>
<div style="position:absolute;left:518.8px;top:300.1px;width:594.5px;height:14.75px;box-sizing:border-box;border-bottom:1px solid #e6e6e6;background:#fff;"></div>
<div style="position:absolute;left:909.5px;top:300.1px;width:101.20000000000005px;height:13.75px;background:#f3f3f3;"></div>
<div style="position:absolute;left:1010.7px;top:300.1px;width:102.59999999999991px;height:13.75px;background:#067a06;"></div>
<div style="position:absolute;left:605.0px;top:300.1px;width:1px;height:14.75px;background:#e6e6e6;"></div>
<div style="position:absolute;left:706.5px;top:300.1px;width:1px;height:14.75px;background:#e6e6e6;"></div>
<div style="position:absolute;left:807.9px;top:300.1px;width:1px;height:14.75px;background:#e6e6e6;"></div>
<div style="position:absolute;left:909.0px;top:300.1px;width:1px;height:14.75px;background:#e6e6e6;"></div>
<div style="position:absolute;left:1010.2px;top:300.1px;width:1px;height:14.75px;background:#e6e6e6;"></div>
<div style="position:absolute;left:518.3px;top:300.1px;width:1px;height:14.75px;background:#e6e6e6;"></div>
<span class="t" style="font-size:9px;line-height:13px;font-weight:400;color:#1a1a1a;transform:translate(520.50px,300.68px) scaleX(0.8829);-webkit-text-stroke:.18px;">Gas naturale (Metano)</span>
<span class="t" style="font-size:9px;line-height:13px;font-weight:400;color:#1a1a1a;transform:translate(668.86px,300.68px) scaleX(0.9150);-webkit-text-stroke:.18px;">36.699,06</span>
<span class="t" style="font-size:9px;line-height:13px;font-weight:400;color:#1a1a1a;transform:translate(769.86px,300.68px) scaleX(0.9150);-webkit-text-stroke:.18px;">22.302,00</span>
<span class="t" style="font-size:9px;line-height:13px;font-weight:400;color:#1a1a1a;transform:translate(870.96px,300.68px) scaleX(0.9150);-webkit-text-stroke:.18px;">23.359,00</span>
<span class="t" style="font-size:9px;line-height:13px;font-weight:400;color:#1a1a1a;transform:translate(974.20px,300.68px) scaleX(0.9150);-webkit-text-stroke:.18px;">-1.057,00</span>
<span class="t" style="font-size:9px;line-height:13px;font-weight:400;color:#fff;transform:translate(1093.23px,300.68px) scaleX(0.9150);">-4,74</span>
<div style="position:absolute;left:501.5px;top:438.3px;width:616px;height:107.90000000000003px;box-sizing:border-box;border:1px solid #dcdcdc;border-radius:2px;background:#fff;"></div>
<div style="position:absolute;left:502px;top:438.8px;width:615px;height:14px;background:linear-gradient(#fbfbfb,#f3f3f3 50%,#e5e5e5);border-radius:2px 2px 0 0;"></div>
<span class="t" style="font-size:9px;line-height:13px;font-weight:700;color:#1a1a1a;transform:translate(510.50px,438.80px) scaleX(0.9151);-webkit-text-stroke:.1px;">Riepilogo modello di diagnosi su base annuale</span>
<div style="position:absolute;left:503.8px;top:454.2px;width:611.5px;height:89.8px;box-sizing:border-box;border:1px solid #cdcdcd;background:#fff;"></div>
<div style="position:absolute;left:505.5px;top:455.4px;width:607.8px;height:16.2px;box-sizing:border-box;border:1px solid #56a4e0;background:linear-gradient(#fff,#f9f9f9 45%,#e2e2e2);"></div>
<div style="position:absolute;left:605.0px;top:455.4px;width:1px;height:16.2px;background:#56a4e0;"></div>
<div style="position:absolute;left:706.5px;top:455.4px;width:1px;height:16.2px;background:#56a4e0;"></div>
<div style="position:absolute;left:807.9px;top:455.4px;width:1px;height:16.2px;background:#56a4e0;"></div>
<div style="position:absolute;left:909.0px;top:455.4px;width:1px;height:16.2px;background:#56a4e0;"></div>
<div style="position:absolute;left:1010.2px;top:455.4px;width:1px;height:16.2px;background:#56a4e0;"></div>
<span class="t" style="font-size:9px;line-height:13px;font-weight:400;color:#1a1a1a;transform:translate(508.00px,457.80px) scaleX(0.8844);-webkit-text-stroke:.18px;">Anno</span>
<span class="t" style="font-size:9px;line-height:13px;font-weight:400;color:#1a1a1a;transform:translate(611.50px,457.80px) scaleX(0.8814);-webkit-text-stroke:.18px;">Consumo standard [kWh]</span>
<span class="t" style="font-size:9px;line-height:13px;font-weight:400;color:#1a1a1a;transform:translate(714.40px,457.80px) scaleX(0.8606);-webkit-text-stroke:.18px;">Consumo diagnosi [kWh]</span>
<span class="t" style="font-size:9px;line-height:13px;font-weight:400;color:#1a1a1a;transform:translate(821.00px,457.80px) scaleX(0.8666);-webkit-text-stroke:.18px;">Consumo reale [kWh]</span>
<span class="t" style="font-size:9px;line-height:13px;font-weight:400;color:#1a1a1a;transform:translate(934.00px,457.80px) scaleX(0.9456);-webkit-text-stroke:.18px;">Differenza [±]</span>
<span class="t" style="font-size:9px;line-height:13px;font-weight:400;color:#1a1a1a;transform:translate(1036.00px,457.80px) scaleX(0.8976);-webkit-text-stroke:.18px;">Variazione [%]</span>
<div style="position:absolute;left:505.5px;top:472px;width:607.8px;height:14.75px;box-sizing:border-box;border-bottom:1px solid #e6e6e6;background:#fff;"></div>
<div style="position:absolute;left:909.5px;top:472px;width:101.20000000000005px;height:13.75px;background:#f3f3f3;"></div>
<div style="position:absolute;left:1010.7px;top:472px;width:102.59999999999991px;height:13.75px;background:#067a06;"></div>
<div style="position:absolute;left:605.0px;top:472px;width:1px;height:14.75px;background:#e6e6e6;"></div>
<div style="position:absolute;left:706.5px;top:472px;width:1px;height:14.75px;background:#e6e6e6;"></div>
<div style="position:absolute;left:807.9px;top:472px;width:1px;height:14.75px;background:#e6e6e6;"></div>
<div style="position:absolute;left:909.0px;top:472px;width:1px;height:14.75px;background:#e6e6e6;"></div>
<div style="position:absolute;left:1010.2px;top:472px;width:1px;height:14.75px;background:#e6e6e6;"></div>
<span class="t" style="font-size:9px;line-height:13px;font-weight:700;color:#1a1a1a;transform:translate(507.40px,471.98px) scaleX(0.8786);-webkit-text-stroke:.1px;">2016</span>
<span class="t" style="font-size:9px;line-height:13px;font-weight:700;color:#1a1a1a;transform:translate(669.96px,471.98px) scaleX(0.8850);-webkit-text-stroke:.1px;">37.063,63</span>
<span class="t" style="font-size:9px;line-height:13px;font-weight:700;color:#1a1a1a;transform:translate(771.06px,471.98px) scaleX(0.8850);-webkit-text-stroke:.1px;">26.031,02</span>
<span class="t" style="font-size:9px;line-height:13px;font-weight:700;color:#1a1a1a;transform:translate(872.16px,471.98px) scaleX(0.8850);-webkit-text-stroke:.1px;">27.059,00</span>
<span class="t" style="font-size:9px;line-height:13px;font-weight:700;color:#1a1a1a;transform:translate(975.34px,471.98px) scaleX(0.8850);-webkit-text-stroke:.1px;">-1.027,98</span>
<span class="t" style="font-size:9px;line-height:13px;font-weight:700;color:#fff;transform:translate(1093.84px,471.98px) scaleX(0.8850);">-3,95</span>
<div style="position:absolute;left:505.5px;top:486.75px;width:607.8px;height:14.75px;box-sizing:border-box;border-bottom:1px solid #e6e6e6;background:#fff;"></div>
<div style="position:absolute;left:909.5px;top:486.75px;width:101.20000000000005px;height:13.75px;background:#f3f3f3;"></div>
<div style="position:absolute;left:1010.7px;top:486.75px;width:102.59999999999991px;height:13.75px;background:#067a06;"></div>
<div style="position:absolute;left:605.0px;top:486.75px;width:1px;height:14.75px;background:#e6e6e6;"></div>
<div style="position:absolute;left:706.5px;top:486.75px;width:1px;height:14.75px;background:#e6e6e6;"></div>
<div style="position:absolute;left:807.9px;top:486.75px;width:1px;height:14.75px;background:#e6e6e6;"></div>
<div style="position:absolute;left:909.0px;top:486.75px;width:1px;height:14.75px;background:#e6e6e6;"></div>
<div style="position:absolute;left:1010.2px;top:486.75px;width:1px;height:14.75px;background:#e6e6e6;"></div>
<span class="t" style="font-size:9px;line-height:13px;font-weight:700;color:#1a1a1a;transform:translate(507.40px,486.73px) scaleX(0.8786);-webkit-text-stroke:.1px;">2015</span>
<span class="t" style="font-size:9px;line-height:13px;font-weight:700;color:#1a1a1a;transform:translate(669.96px,486.73px) scaleX(0.8850);-webkit-text-stroke:.1px;">37.063,63</span>
<span class="t" style="font-size:9px;line-height:13px;font-weight:700;color:#1a1a1a;transform:translate(771.06px,486.73px) scaleX(0.8850);-webkit-text-stroke:.1px;">26.031,02</span>
<span class="t" style="font-size:9px;line-height:13px;font-weight:700;color:#1a1a1a;transform:translate(872.16px,486.73px) scaleX(0.8850);-webkit-text-stroke:.1px;">25.741,50</span>
<span class="t" style="font-size:9px;line-height:13px;font-weight:700;color:#1a1a1a;transform:translate(984.63px,486.73px) scaleX(0.8850);-webkit-text-stroke:.1px;">289,52</span>
<span class="t" style="font-size:9px;line-height:13px;font-weight:700;color:#fff;transform:translate(1096.93px,486.73px) scaleX(0.8850);">1,11</span>
<div style="position:absolute;left:505.5px;top:501.5px;width:607.8px;height:14.75px;box-sizing:border-box;border-bottom:1px solid #e6e6e6;background:#fff;"></div>
<div style="position:absolute;left:909.5px;top:501.5px;width:101.20000000000005px;height:13.75px;background:#f3f3f3;"></div>
<div style="position:absolute;left:1010.7px;top:501.5px;width:102.59999999999991px;height:13.75px;background:#067a06;"></div>
<div style="position:absolute;left:605.0px;top:501.5px;width:1px;height:14.75px;background:#e6e6e6;"></div>
<div style="position:absolute;left:706.5px;top:501.5px;width:1px;height:14.75px;background:#e6e6e6;"></div>
<div style="position:absolute;left:807.9px;top:501.5px;width:1px;height:14.75px;background:#e6e6e6;"></div>
<div style="position:absolute;left:909.0px;top:501.5px;width:1px;height:14.75px;background:#e6e6e6;"></div>
<div style="position:absolute;left:1010.2px;top:501.5px;width:1px;height:14.75px;background:#e6e6e6;"></div>
<span class="t" style="font-size:9px;line-height:13px;font-weight:700;color:#1a1a1a;transform:translate(507.40px,501.48px) scaleX(0.8786);-webkit-text-stroke:.1px;">2014</span>
<span class="t" style="font-size:9px;line-height:13px;font-weight:700;color:#1a1a1a;transform:translate(669.96px,501.48px) scaleX(0.8850);-webkit-text-stroke:.1px;">37.063,63</span>
<span class="t" style="font-size:9px;line-height:13px;font-weight:700;color:#1a1a1a;transform:translate(771.06px,501.48px) scaleX(0.8850);-webkit-text-stroke:.1px;">26.031,02</span>
<span class="t" style="font-size:9px;line-height:13px;font-weight:700;color:#1a1a1a;transform:translate(872.16px,501.48px) scaleX(0.8850);-webkit-text-stroke:.1px;">26.361,40</span>
<span class="t" style="font-size:9px;line-height:13px;font-weight:700;color:#1a1a1a;transform:translate(981.98px,501.48px) scaleX(0.8850);-webkit-text-stroke:.1px;">-330,38</span>
<span class="t" style="font-size:9px;line-height:13px;font-weight:700;color:#fff;transform:translate(1093.84px,501.48px) scaleX(0.8850);">-1,27</span>
<div style="position:absolute;left:501.5px;top:549.4px;width:616px;height:21.6px;box-sizing:border-box;border:1px solid #e0e0e0;border-radius:2.5px;background:#fcfcfc;"></div>
<span class="t" style="font-size:9px;line-height:13px;font-weight:400;color:#1a1a1a;transform:translate(507.00px,554.10px) scaleX(0.8592);-webkit-text-stroke:.18px;">Congruità del modello di diagnosi:</span>
<div style="position:absolute;left:630px;top:553.5px;width:16px;height:13.5px;box-sizing:border-box;border:1px solid #9a9a9a;background:#067a06;"></div>
<span class="t" style="font-size:9px;line-height:13px;font-weight:700;color:#1a1a1a;transform:translate(651.00px,553.80px) scaleX(0.9042);-webkit-text-stroke:.1px;">ALTA</span>
<div style="position:absolute;left:697px;top:553.5px;width:16.5px;height:13.5px;box-sizing:border-box;border:1px solid #9a9a9a;background:#fff8d2;"></div>
<span class="t" style="font-size:9px;line-height:13px;font-weight:700;color:#1a1a1a;transform:translate(718.60px,553.80px) scaleX(0.9103);-webkit-text-stroke:.1px;">MEDIA</span>
<div style="position:absolute;left:763px;top:553.5px;width:16px;height:13.5px;box-sizing:border-box;border:1px solid #9a9a9a;background:#ffa500;"></div>
<span class="t" style="font-size:9px;line-height:13px;font-weight:700;color:#1a1a1a;transform:translate(784.00px,553.80px) scaleX(0.8091);-webkit-text-stroke:.1px;">BASSA</span>
<div style="position:absolute;left:827px;top:553.5px;width:16px;height:13.5px;box-sizing:border-box;border:1px solid #9a9a9a;background:#ff0000;"></div>
<span class="t" style="font-size:9px;line-height:13px;font-weight:700;color:#1a1a1a;transform:translate(848.00px,553.80px) scaleX(0.9200);-webkit-text-stroke:.1px;">NON CONFORME</span>
</body></html>
